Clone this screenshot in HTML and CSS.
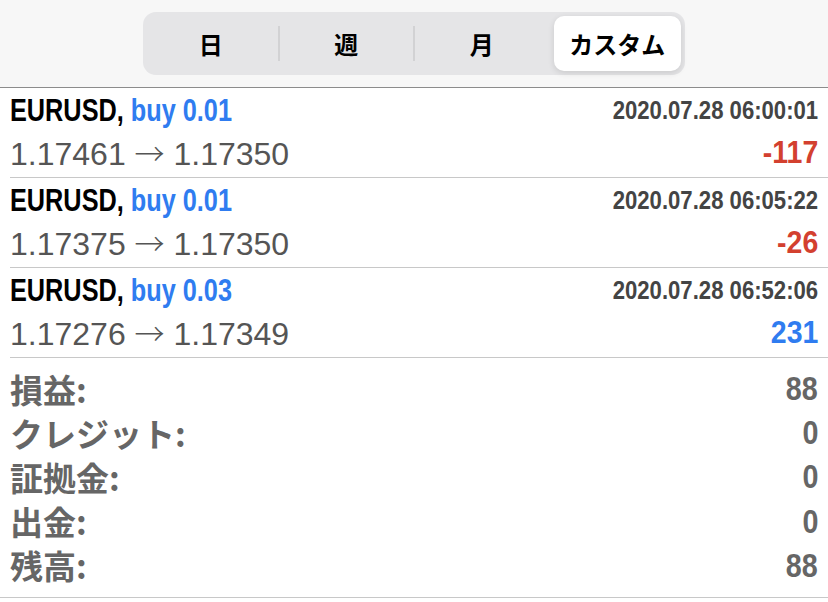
FILE: index.html
```html
<!DOCTYPE html>
<html lang="ja">
<head>
<meta charset="utf-8">
<link rel="stylesheet" href="styles.css">
</head>
<body>
<header class="header">
  <div class="seg">
    <div class="seg-item">日</div>
    <div class="seg-item">週</div>
    <div class="seg-item">月</div>
    <div class="seg-item active">カスタム</div>
  </div>
</header>
<main>
  <div class="deal">
    <div class="line1"><span class="sym">EURUSD, <span class="blue">buy 0.01</span></span><span class="date">2020.07.28 06:00:01</span></div>
    <div class="line2"><span class="price">1.17461 <span class="arrow">→</span> 1.17350</span><span class="profit red">-117</span></div>
  </div>
  <div class="deal">
    <div class="line1"><span class="sym">EURUSD, <span class="blue">buy 0.01</span></span><span class="date">2020.07.28 06:05:22</span></div>
    <div class="line2"><span class="price">1.17375 <span class="arrow">→</span> 1.17350</span><span class="profit red">-26</span></div>
  </div>
  <div class="deal">
    <div class="line1"><span class="sym">EURUSD, <span class="blue">buy 0.03</span></span><span class="date">2020.07.28 06:52:06</span></div>
    <div class="line2"><span class="price">1.17276 <span class="arrow">→</span> 1.17349</span><span class="profit blue">231</span></div>
  </div>
  <div class="summary">
    <div class="srow"><span class="label">損益:</span><span class="val">88</span></div>
    <div class="srow"><span class="label">クレジット:</span><span class="val">0</span></div>
    <div class="srow"><span class="label">証拠金:</span><span class="val">0</span></div>
    <div class="srow"><span class="label">出金:</span><span class="val">0</span></div>
    <div class="srow"><span class="label">残高:</span><span class="val">88</span></div>
  </div>
</main>
</body>
</html>
```
FILE: styles.css
```css
* { box-sizing: border-box; }
html, body { margin: 0; padding: 0; background: #ffffff; }
body { font-family: "Liberation Sans", "Noto Sans CJK JP", sans-serif; width: 828px; }

.header {
  height: 88px;
  background: #f7f7f7;
  border-bottom: 1px solid #8c8c8c;
  padding-top: 12px;
}
.seg {
  width: 542px;
  height: 63px;
  margin: 0 auto;
  background: #e5e5e7;
  border-radius: 13px;
  display: flex;
}
.seg-item {
  flex: 0 0 25%;
  display: flex;
  align-items: center;
  justify-content: center;
  font-family: "Noto Sans CJK JP", sans-serif;
  font-size: 24px;
  font-weight: 700;
  color: #000;
  position: relative;
}
.seg-item + .seg-item::before {
  content: "";
  position: absolute;
  left: -1px;
  top: 14px;
  bottom: 14px;
  width: 2px;
  background: #d2d2d4;
}
.seg-item.active::before { display: none; }
.seg-item.active {
  flex: 0 0 calc(25% - 8px);
  margin: 4px;
  background: #fff;
  border-radius: 10px;
  box-shadow: 0 2px 6px rgba(0,0,0,0.12);
}

.deal {
  height: 90px;
  margin-left: 10px;
  border-bottom: 1px solid #c8c8c8;
  padding-right: 10px;
  padding-top: 2px;
}
.line1, .line2 {
  display: flex;
  justify-content: space-between;
  align-items: center;
}
.line1 { height: 40px; }
.line2 { height: 44px; }

.sym, .date, .profit, .val {
  display: inline-block;
  font-family: "Liberation Sans", sans-serif;
  font-weight: 700;
  white-space: nowrap;
}
.sym {
  font-size: 32px;
  color: #000;
  transform: scaleX(0.79);
  transform-origin: left center;
}
.date {
  font-size: 25px;
  color: #444;
  transform: scaleX(0.885);
  transform-origin: right center;
}
.profit {
  font-size: 32px;
  transform: scaleX(0.89);
  transform-origin: right center;
}
.blue { color: #2f7cf0; }
.red { color: #d3402f; }
.price {
  font-size: 32px;
  color: #555;
  white-space: nowrap;
}
.arrow {
  font-family: "Noto Sans CJK JP", sans-serif;
  font-weight: 300;
  font-size: 30px;
}

.summary {
  height: 240px;
  border-bottom: 1px solid #c8c8c8;
  padding: 9px 10px 10px 10px;
}
.srow {
  height: 44.2px;
  display: flex;
  justify-content: space-between;
  align-items: center;
  color: #666;
}
.label {
  font-family: "Noto Sans CJK JP", sans-serif;
  font-weight: 700;
  font-size: 33px;
  line-height: 1;
}
.val {
  font-size: 33px;
  transform: scaleX(0.87);
  transform-origin: right center;
}
```
